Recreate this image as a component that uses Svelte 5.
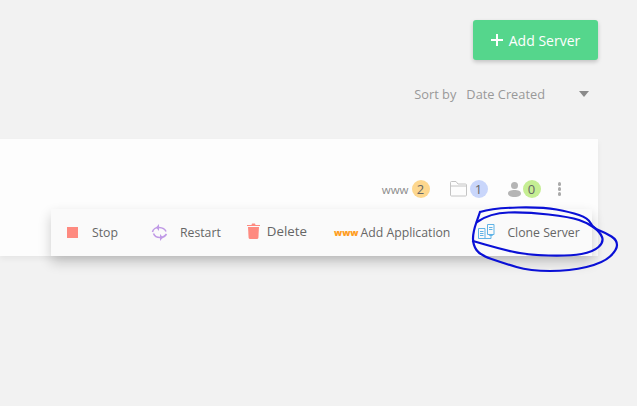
<script>
  const stats = [
    { kind: 'www', count: 2, color: '#fdd78e' },
    { kind: 'folder', count: 1, color: '#c9d6fb' },
    { kind: 'user', count: 0, color: '#c5ee93' }
  ];

  const outer = [[480, 212], [493, 208], [543, 207], [570, 212], [588, 218], [593, 228], [606, 233], [617, 240], [617, 250], [603, 263], [570, 271], [530, 271], [503, 263], [480, 255], [473, 245], [473, 232], [480, 212]];
  const inner = [[477, 222], [490, 213], [527, 212], [570, 217], [588, 223], [600, 232], [604, 242], [593, 252], [570, 256], [527, 255], [497, 248], [473, 241]];

  // smooth line through the points, using midpoints as anchors
  function smooth(pts) {
    let d = `M${pts[0][0]} ${pts[0][1]}`;
    for (let i = 1; i < pts.length - 1; i++) {
      const mx = (pts[i][0] + pts[i + 1][0]) / 2;
      const my = (pts[i][1] + pts[i + 1][1]) / 2;
      d += `Q${pts[i][0]} ${pts[i][1]} ${mx} ${my}`;
    }
    const last = pts[pts.length - 1];
    return d + `L${last[0]} ${last[1]}`;
  }
</script>

<div class="page">
  <div class="toolbar">
    <button class="add-server"><span class="plus"></span>Add Server</button>
  </div>

  <div class="sort-row">
    <span class="sort-label">Sort by</span>
    <span class="sort-value">Date Created</span>
    <span class="caret"></span>
  </div>

  <div class="card">
    <div class="stats">
      {#each stats as s}
        <div class="stat {s.kind}">
          {#if s.kind === 'www'}
            <span class="www-label">www</span>
          {:else if s.kind === 'folder'}
            <svg width="17" height="16" viewBox="0 0 17 16">
              <path d="M.5 14V1.500q0-1 1-1h4.500l2 2.500h7.500q1 0 1 1V14q0 1-1 1h-14q-1 0-1-1zM.5 5h16" fill="none" stroke="#c4c4c4" />
            </svg>
          {:else}
            <svg width="13" height="15" viewBox="0 0 13 15">
              <circle cx="6.500" cy="3.500" r="3.500" fill="#b5b5b5" />
              <path d="M0 11.500C0 9 3 8 6.500 8S13 9 13 11.500C13 13.500 10.500 15 6.500 15S0 13.500 0 11.500z" fill="#b5b5b5" />
            </svg>
          {/if}
          <span class="badge" style="background: {s.color}">{s.count}</span>
        </div>
      {/each}
      <div class="kebab"><i></i><i></i><i></i></div>
    </div>

    <div class="menu">
      <div class="item stop">
        <span class="square"></span>
        <span>Stop</span>
      </div>
      <div class="item restart">
        <svg width="18" height="17" viewBox="0 0 18 17" fill="none" stroke="#c09ae6" stroke-width="1.600">
          <path d="M1.500 8C2 5 5 3.300 8 3.500c3.500.2 6 1.500 7 4" />
          <path d="M8 0L5 3.500 8 7z" fill="#c09ae6" stroke="none" />
          <path d="M2.500 9.500c1 2.500 3.500 4 6.500 4 2.500 0 5-1 6.500-3.500" />
          <path d="M9 10l3 3.500L9 17z" fill="#c09ae6" stroke="none" />
        </svg>
        <span>Restart</span>
      </div>
      <div class="item delete">
        <svg width="13" height="16" viewBox="0 0 13 16" fill="#fe8a80">
          <path d="M1 4h11l-.6 10.500q-.1 1.500-1.500 1.500H3.100q-1.400 0-1.500-1.500z" />
          <path d="M0 2h4.500l.5-1.500h3L8.500 2H13v1H0z" />
        </svg>
        <span>Delete</span>
      </div>
      <div class="item app">
        <span class="www-icon">www</span>
        <span>Add Application</span>
      </div>
      <div class="item clone">
        <svg width="17" height="17" viewBox="0 0 17 17" fill="none" stroke="#5fb3e6">
          <path d="M.5 4.500h6.500v10H.5z" />
          <path d="M9.500.5h6.500v10H9.500z" />
          <path d="M2 7.500h3.500M2 9.500h3.500M2 11.500h3.500M11 3.500h3.500M11 5.500h3.500" />
          <path d="M7 14.500h6V11" />
          <path d="M10.800 12l2.200-2.200 2.200 2.200z" fill="#5fb3e6" stroke="none" />
        </svg>
        <span>Clone Server</span>
      </div>
    </div>
  </div>

  <!-- hand drawn annotation -->
  <svg class="scribble" width="637" height="406" viewBox="0 0 637 406" fill="none" stroke="#0a10d6" stroke-width="2.200" stroke-linecap="round">
    <path d={smooth(outer)} />
    <path d={smooth(inner)} />
  </svg>
</div>

<style>
  :global(body) {
    margin: 0;
    background: #f2f2f2;
  }

  .page {
    position: relative;
    height: 406px;
    overflow: hidden;
    padding: 20px 39px 0 0;
    box-sizing: border-box;
    font-family: "Open Sans", "Noto Sans", sans-serif;
    font-size: 13px;
    color: #666;
  }

  .toolbar {
    display: flex;
    justify-content: flex-end;
  }

  .add-server {
    display: flex;
    align-items: center;
    justify-content: center;
    gap: 6px;
    width: 125px;
    height: 40px;
    background: #55d68c;
    color: #fff;
    border: none;
    border-radius: 3px;
    box-shadow: 0 2px 4px rgba(0, 0, 0, 0.2);
    font: inherit;
    font-size: 14px;
  }

  .plus {
    width: 12px;
    height: 12px;
    background:
      linear-gradient(#fff, #fff) center / 100% 2px no-repeat,
      linear-gradient(#fff, #fff) center / 2px 100% no-repeat;
  }

  .sort-row {
    display: flex;
    align-items: center;
    justify-content: flex-end;
    height: 20px;
    margin-top: 24px;
    padding-right: 9px;
    color: #999;
    font-size: 12.800px;
  }

  .sort-label {
    margin-right: 10px;
  }

  .caret {
    margin-left: 34px;
    border-style: solid;
    border-width: 6px 5px 0;
    border-color: #8a8a8a transparent transparent;
  }

  .card {
    display: flex;
    flex-direction: column;
    justify-content: flex-end;
    height: 117px;
    margin-top: 35px;
    background: #fdfdfd;
    box-shadow: 0 3px 6px rgba(0, 0, 0, 0.05);
  }

  .stats {
    display: flex;
    align-items: center;
    justify-content: flex-end;
    height: 20px;
    margin-bottom: 10px;
    padding-right: 37px;
  }

  .stat {
    display: flex;
    align-items: center;
    margin-right: 20px;
    color: #888;
  }

  .stat.www {
    gap: 3px;
  }

  .stat.folder {
    gap: 3px;
  }

  .stat.user {
    gap: 2px;
    margin-right: 17px;
  }

  .www-label {
    font-size: 11.500px;
    color: #8c8c8c;
  }

  .badge {
    display: flex;
    align-items: center;
    justify-content: center;
    width: 18px;
    height: 18px;
    border-radius: 50%;
    font-size: 13px;
    color: #666;
  }

  .kebab {
    display: flex;
    flex-direction: column;
    gap: 1.500px;
  }

  .kebab i {
    width: 3.500px;
    height: 3.500px;
    background: #aaa;
    border-radius: 50%;
  }

  .menu {
    display: flex;
    align-items: center;
    height: 47px;
    margin-left: 51px;
    margin-right: 6px;
    background: #fafafa;
    box-shadow: 0 6px 12px rgba(0, 0, 0, 0.2);
    font-size: 12.250px;
  }

  .item {
    display: flex;
    align-items: center;
  }

  .stop {
    margin-left: 16px;
    gap: 14px;
  }

  .square {
    width: 11px;
    height: 11px;
    background: #fe8a80;
  }

  .restart {
    margin-left: 33px;
    gap: 11px;
  }

  .delete {
    margin-left: 26px;
    gap: 7px;
    margin-top: -3px;
    font-size: 13.300px;
  }

  .app {
    margin-left: 27px;
    gap: 2px;
  }

  .www-icon {
    font-size: 9px;
    font-weight: 800;
    color: #ff9d1e;
  }

  .clone {
    margin-left: 28px;
    gap: 12px;
  }

  .scribble {
    position: absolute;
    left: 0;
    top: 0;
    pointer-events: none;
  }
</style>
